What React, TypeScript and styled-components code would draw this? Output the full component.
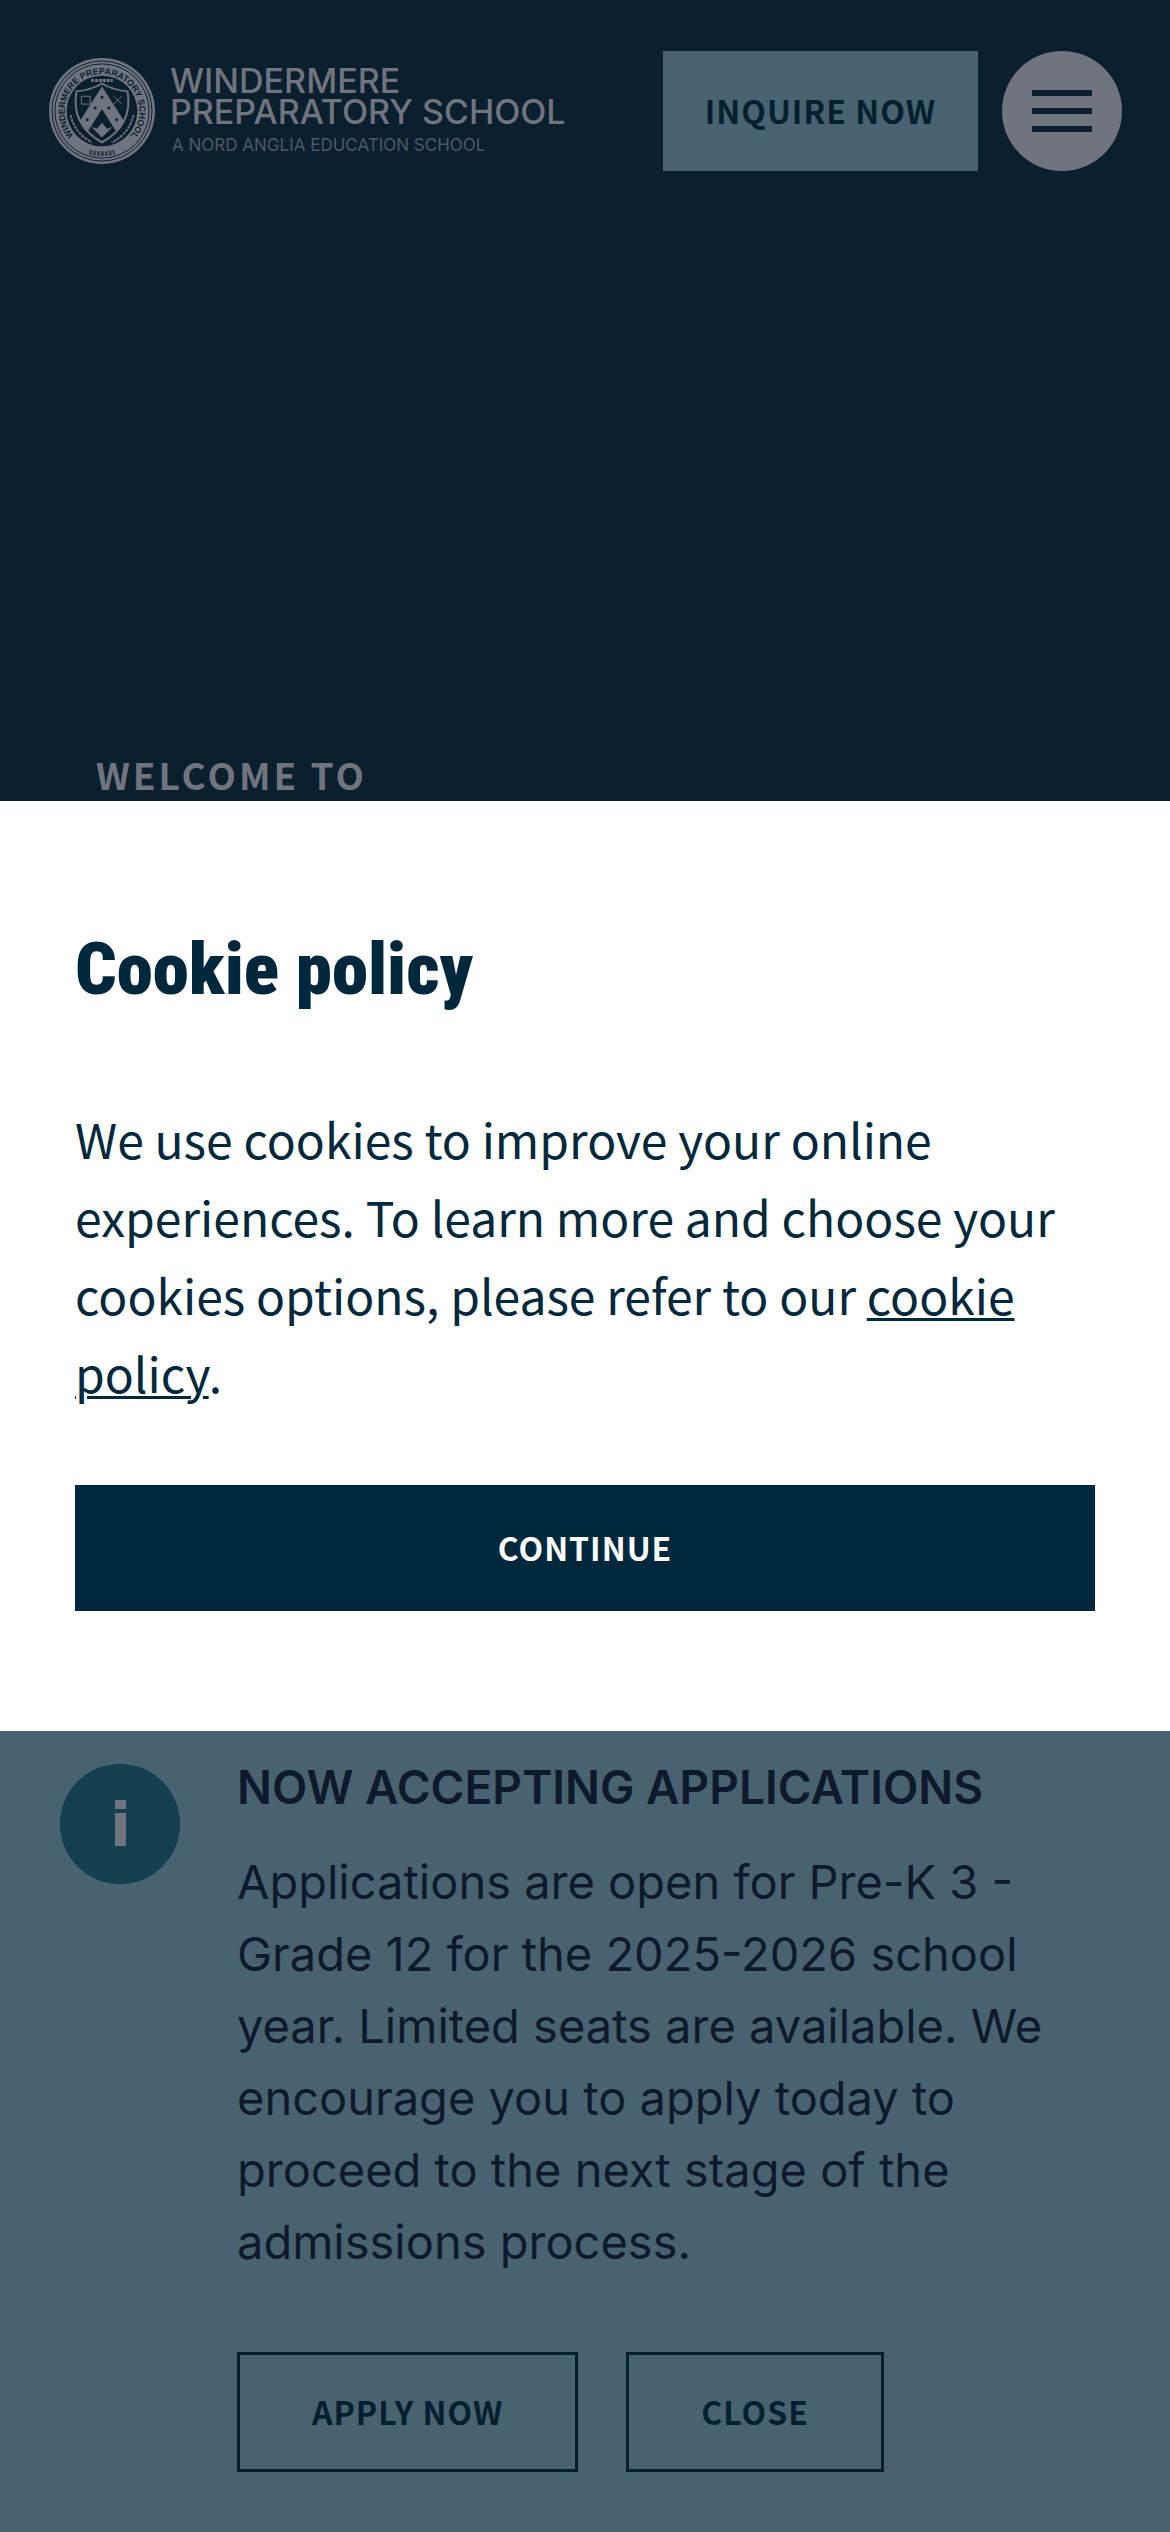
import React, { useState } from "react";
import styled, { createGlobalStyle, css } from "styled-components";

const sans = '"Noto Sans CJK SC", "Noto Sans", sans-serif';
const grotesk = 'Inter, "Liberation Sans", sans-serif';
const condensed = '"Roboto Condensed", Roboto, "Liberation Sans", sans-serif';

const color = {
  night: "#0b1f2f",
  steel: "#48626f",
  fog: "#70747f",
  teal: "#133f4e",
  ink: "#0e1a2b",
  deep: "#04202f",
  navy: "#00283c",
};

const GlobalStyle = createGlobalStyle`
  *, *::before, *::after { box-sizing: border-box; }
  body { margin: 0; background: ${color.night}; font-family: ${sans}; }
  h1, h2, p { margin: 0; }
`;

const Page = styled.div`
  display: flex;
  flex-direction: column;
  min-height: 100vh;
`;

const Header = styled.header`
  display: flex;
  align-items: center;
  gap: 24px;
  padding: 51px 48px;
`;

const LogoLink = styled.a`
  display: flex;
  align-items: center;
  gap: 14px;
  margin-right: auto;
  color: ${color.fog};
  text-decoration: none;
`;

const Wordmark = styled.span`
  display: flex;
  flex-direction: column;
  font-family: ${grotesk};
`;

const SchoolName = styled.span`
  font-size: 34px;
  font-weight: 500;
  line-height: 31px;
  white-space: nowrap;
`;

const Tagline = styled.span`
  padding: 6px 0 0 2px;
  font-size: 17px;
  line-height: 24px;
  white-space: nowrap;
  color: #4d5966;
`;

const Button = styled.button<{ $kind: "filled" | "outline" | "primary" }>`
  height: 120px;
  font-family: ${sans};
  font-size: 32px;
  font-weight: 700;
  line-height: 48px;
  letter-spacing: 1px;
  text-transform: uppercase;
  white-space: nowrap;
  border: 3px solid ${color.deep};
  border-radius: 0;
  cursor: pointer;

  ${({ $kind }) =>
    $kind === "filled" &&
    css`
      padding: 0 39px 3px;
      color: ${color.deep};
      background: ${color.steel};
      border-color: ${color.steel};
    `}
  ${({ $kind }) =>
    $kind === "outline" &&
    css`
      padding: 0 72px 3px;
      color: ${color.deep};
      background: transparent;
    `}
  ${({ $kind }) =>
    $kind === "primary" &&
    css`
      width: 100%;
      height: 126px;
      padding: 0 0 3px;
      color: #fff;
      background: ${color.navy};
      border-color: ${color.navy};
    `}
`;

const MenuButton = styled.button`
  display: flex;
  flex-direction: column;
  align-items: center;
  justify-content: center;
  gap: 12px;
  width: 120px;
  height: 120px;
  padding: 0;
  border: 0;
  border-radius: 50%;
  background: ${color.fog};
  cursor: pointer;
`;

const MenuBar = styled.span`
  width: 60px;
  height: 6px;
  background: ${color.night};
`;

const Hero = styled.main`
  flex: 1;
  padding: 522px 96px 0;
`;

const Welcome = styled.p`
  font-size: 37px;
  font-weight: 600;
  line-height: 60px;
  letter-spacing: 3px;
  text-transform: uppercase;
  color: ${color.fog};
`;

const Notice = styled.section`
  display: flex;
  align-items: flex-start;
  gap: 57px;
  padding: 60px;
  background: ${color.steel};
  color: ${color.ink};
`;

const InfoBadge = styled.span`
  display: flex;
  flex: none;
  align-items: center;
  justify-content: center;
  width: 120px;
  height: 120px;
  border-radius: 50%;
  background: ${color.teal};
`;

const NoticeBody = styled.div`
  flex: 1;
  font-family: ${grotesk};
`;

const NoticeTitle = styled.h2`
  font-size: 46px;
  font-weight: 600;
  line-height: 46px;
  text-transform: uppercase;
`;

const NoticeText = styled.p`
  padding: 36px 0 74px;
  font-size: 47px;
  line-height: 72px;
`;

const Actions = styled.div`
  display: flex;
  flex-wrap: wrap;
  gap: 48px;
`;

const ModalLayer = styled.div`
  position: fixed;
  inset: 0;
  display: flex;
  align-items: center;
`;

const Dialog = styled.section`
  width: 100%;
  padding: 120px 75px;
  background: #fff;
  color: ${color.navy};
`;

const DialogTitle = styled.h1`
  font-family: ${condensed};
  font-size: 73px;
  font-weight: 900;
  line-height: 96px;
`;

const DialogText = styled.p`
  padding: 82px 0 74px;
  font-size: 48px;
  line-height: 78px;
`;

const PolicyLink = styled.a`
  color: inherit;
  text-decoration-thickness: 3px;
  text-underline-offset: 3px;
`;

const Seal = () => (
  <svg width="108" height="106" viewBox="0 0 108 108" aria-hidden="true">
    <defs>
      <path id="seal-name" d="M26 80 A38 38 0 1 1 82 80" />
    </defs>
    <circle cx="54" cy="54" r="54" fill={color.fog} />
    <circle cx="54" cy="54" r="51" fill="none" stroke={color.night} strokeWidth="1" />
    <circle cx="54" cy="54" r="48" fill="none" stroke={color.night} strokeWidth="1" />
    <circle cx="54" cy="54" r="36" fill={color.night} />
    <text fontFamily="Liberation Sans, sans-serif" fontSize="9" fontWeight="700" fill={color.night}>
      <textPath href="#seal-name" startOffset="50%" textAnchor="middle">
        WINDERMERE PREPARATORY SCHOOL
      </textPath>
    </text>
    <path
      d="M28 34 Q42 33 54 26 Q66 33 80 34 Q86 68 54 86 Q22 68 28 34Z"
      fill={color.night}
      stroke={color.fog}
      strokeWidth="2"
    />
    <path d="M54 29 L77 65 L68 74 L54 52 L40 74 L31 65Z" fill={color.fog} />
    <path d="M54 81 L43 70 L49 72 L54 66 L59 72 L65 70Z" fill={color.fog} />
    <path d="M33 39h9v8h-9z M66 39l8 8m0-8l-8 8" fill="none" stroke={color.fog} strokeWidth="1" />
    <path
      d="M22 58 Q26 77 44 86 M86 58 Q82 77 64 86"
      fill="none"
      stroke={color.fog}
      strokeWidth="2"
      strokeDasharray="3 1"
    />
    <path d="M43 23h22" fill="none" stroke={color.fog} strokeWidth="3" strokeDasharray="3 1" />
    <g fill={color.night}>
      <circle cx="54" cy="40" r="1.5" />
      <circle cx="47" cy="51" r="1.5" />
      <circle cx="61" cy="51" r="1.5" />
      <circle cx="39" cy="63" r="1.5" />
      <circle cx="69" cy="63" r="1.5" />
    </g>
    <path d="M41 96q13 3 26 0" fill="none" stroke={color.night} strokeWidth="5" strokeDasharray="3 1" opacity="0.6" />
  </svg>
);

const InfoIcon = () => (
  <svg width="12" height="48" viewBox="0 0 12 48" aria-hidden="true">
    <path d="M1 0h11v9H1z M1 13h11v33H1z" fill={color.fog} />
  </svg>
);

export default function App() {
  const [dialogOpen, setDialogOpen] = useState(true);
  const [noticeOpen, setNoticeOpen] = useState(true);

  return (
    <>
      <GlobalStyle />
      <Page>
        <Header>
          <LogoLink href="#">
            <Seal />
            <Wordmark>
              <SchoolName>WINDERMERE</SchoolName>
              <SchoolName>PREPARATORY SCHOOL</SchoolName>
              <Tagline>A NORD ANGLIA EDUCATION SCHOOL</Tagline>
            </Wordmark>
          </LogoLink>
          <Button $kind="filled">Inquire now</Button>
          <MenuButton aria-label="Open menu">
            <MenuBar />
            <MenuBar />
            <MenuBar />
          </MenuButton>
        </Header>
        <Hero>
          <Welcome>Welcome to</Welcome>
        </Hero>
        {noticeOpen && (
          <Notice>
            <InfoBadge>
              <InfoIcon />
            </InfoBadge>
            <NoticeBody>
              <NoticeTitle>Now accepting applications</NoticeTitle>
              <NoticeText>
                Applications are open for Pre-K 3 - Grade 12 for the 2025-2026 school year. Limited seats are
                available. We encourage you to apply today to proceed to the next stage of the admissions process.
              </NoticeText>
              <Actions>
                <Button $kind="outline">Apply now</Button>
                <Button $kind="outline" onClick={() => setNoticeOpen(false)}>
                  Close
                </Button>
              </Actions>
            </NoticeBody>
          </Notice>
        )}
      </Page>
      {dialogOpen && (
        <ModalLayer>
          <Dialog role="dialog" aria-modal="true" aria-labelledby="cookie-title">
            <DialogTitle id="cookie-title">Cookie policy</DialogTitle>
            <DialogText>
              We use cookies to improve your online experiences. To learn more and choose your cookies options,
              please refer to our <PolicyLink href="#">cookie policy</PolicyLink>.
            </DialogText>
            <Button $kind="primary" onClick={() => setDialogOpen(false)}>
              Continue
            </Button>
          </Dialog>
        </ModalLayer>
      )}
    </>
  );
}
